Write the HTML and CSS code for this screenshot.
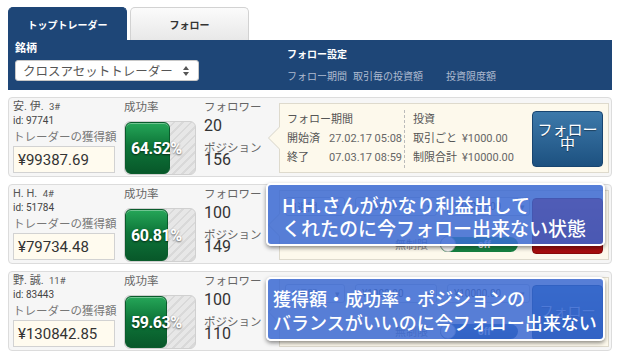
FILE: index.html
```html
<!DOCTYPE html>
<html lang="ja">
<head>
<meta charset="UTF-8">
<meta name="viewport" content="width=device-width, initial-scale=1.0">
<title>トップトレーダー</title>
<link rel="stylesheet" href="styles.css">
</head>
<body>

<div class="page">
    <div class="tabs">
        <div class="tab active">トップトレーダー</div>
        <div class="tab">フォロー</div>
    </div>

    <div class="header">
        <div class="brand">
            <div class="brand-label">銘柄</div>
            <div class="select">クロスアセットトレーダー
                <svg class="updown" width="6" height="10" viewBox="0 0 6 10"><polygon points="0,4 3,0 6,4" fill="#555"/><polygon points="0,6 3,10 6,6" fill="#555"/></svg>
            </div>
        </div>
        <div class="settings">
            <div class="settings-title">フォロー設定</div>
            <div class="settings-sub">
                <span class="sub-period">フォロー期間</span>
                <span class="sub-amount">取引毎の投資額</span>
                <span>投資限度額</span>
            </div>
        </div>
    </div>

    <div class="rows">
        <!-- row 1 -->
        <div class="row">
            <div class="trader">
                <div class="name">安. 伊.&nbsp;&nbsp;<span class="rank">3#</span></div>
                <div class="tid">id: 97741</div>
                <div class="earn-label">トレーダーの獲得額</div>
                <div class="earn">¥99387.69</div>
            </div>
            <div class="rate">
                <div class="col-label">成功率</div>
                <div class="gauge">
                    <div class="gauge-fill" style="width: 64.52%"></div>
                    <div class="gauge-text">64.52%</div>
                </div>
            </div>
            <div class="stats">
                <div class="col-label">フォロワー</div>
                <div class="stat-value">20</div>
                <div class="col-label pos-label">ポジション</div>
                <div class="stat-value pos-value">156</div>
            </div>
            <div class="popover">
                <div class="pop-period">
                    <div>フォロー期間</div>
                    <div><span class="pop-key">開始済</span><span class="num">27.02.17 05:08</span></div>
                    <div><span class="pop-key">終了</span><span class="num">07.03.17 08:59</span></div>
                </div>
                <div class="pop-invest">
                    <div>投資</div>
                    <div><span class="pop-key wide">取引ごと</span><span class="num">¥1000.00</span></div>
                    <div><span class="pop-key wide">制限合計</span><span class="num">¥10000.00</span></div>
                </div>
                <div class="follow-btn"><span>フォロー</span><span>中</span></div>
            </div>
        </div>

        <!-- row 2 -->
        <div class="row">
            <div class="trader">
                <div class="name">H. H.&nbsp;&nbsp;<span class="rank">4#</span></div>
                <div class="tid">id: 51784</div>
                <div class="earn-label">トレーダーの獲得額</div>
                <div class="earn">¥79734.48</div>
            </div>
            <div class="rate">
                <div class="col-label">成功率</div>
                <div class="gauge">
                    <div class="gauge-fill" style="width: 60.81%"></div>
                    <div class="gauge-text">60.81%</div>
                </div>
            </div>
            <div class="stats">
                <div class="col-label">フォロワー</div>
                <div class="stat-value">100</div>
                <div class="col-label pos-label">ポジション</div>
                <div class="stat-value pos-value">149</div>
            </div>
            <div class="popover">
                <div class="pop-form">
                    <div class="pop-selects">
                        <div class="mini-select s1">1週間<span class="caret">▾</span></div>
                        <div class="mini-select s2">¥1000.00<span class="caret">▾</span></div>
                        <div class="mini-select s3">¥10000.00<span class="caret">▾</span></div>
                    </div>
                    <div class="pop-limit">
                        <span>無制限</span>
                        <div class="toggle"><span class="knob"></span>off</div>
                    </div>
                </div>
                <div class="follow-btn red"></div>
            </div>
            <div class="callout callout-one">H.H.さんがかなり利益出して<br>くれたのに今フォロー出来ない状態</div>
        </div>

        <!-- row 3 -->
        <div class="row">
            <div class="trader">
                <div class="name">野. 誠.&nbsp;&nbsp;<span class="rank">11#</span></div>
                <div class="tid">id: 83443</div>
                <div class="earn-label">トレーダーの獲得額</div>
                <div class="earn">¥130842.85</div>
            </div>
            <div class="rate">
                <div class="col-label">成功率</div>
                <div class="gauge">
                    <div class="gauge-fill" style="width: 59.63%"></div>
                    <div class="gauge-text">59.63%</div>
                </div>
            </div>
            <div class="stats">
                <div class="col-label">フォロワー</div>
                <div class="stat-value">100</div>
                <div class="col-label pos-label">ポジション</div>
                <div class="stat-value pos-value">110</div>
            </div>
            <div class="popover">
                <div class="pop-form">
                    <div class="pop-selects">
                        <div class="mini-select s1">1週間<span class="caret">▾</span></div>
                        <div class="mini-select s2">¥1000.00<span class="caret">▾</span></div>
                        <div class="mini-select s3">¥10000.00<span class="caret">▾</span></div>
                    </div>
                    <div class="pop-limit">
                        <span>無制限</span>
                        <div class="toggle blue"><span class="knob"></span>off</div>
                    </div>
                </div>
                <div class="follow-btn plain"><span>フォロー</span></div>
            </div>
            <div class="callout callout-two">獲得額・成功率・ポジションの<br>バランスがいいのに今フォロー出来ない</div>
        </div>
    </div>
</div>

</body>
</html>
```

FILE: styles.css
```css
body {
    margin: 0;
    font-family: Roboto, "Noto Sans CJK JP", sans-serif;
    background-color: #fff;
    color: #555;
}
.page {
    padding: 7px 8px 0;
}
.num {
    font-family: "Liberation Sans Narrow", Roboto, "Noto Sans CJK JP", sans-serif;
    color: #666;
}

/* tabs */
.tabs {
    display: flex;
    gap: 3px;
}
.tab {
    width: 119px;
    height: 33px;
    box-sizing: border-box;
    display: flex;
    align-items: center;
    justify-content: center;
    font-size: 10px;
    font-weight: bold;
    color: #333;
    border: 1px solid #d2d2d2;
    border-bottom: none;
    border-radius: 5px 5px 0 0;
    background: linear-gradient(#fbfbfb, #e8e8e8);
}
.tab.active {
    background: #1e4677;
    border-color: #1e4677;
    color: #fff;
}

/* blue header */
.header {
    display: flex;
    height: 50px;
    padding: 0 7px;
    background-color: #1e4677;
    color: #fff;
}
.brand {
    width: 272px;
}
.brand-label {
    padding-top: 2px;
    font-size: 11px;
    font-weight: bold;
    line-height: 14px;
}
.select {
    display: flex;
    align-items: center;
    justify-content: space-between;
    width: 184px;
    height: 21px;
    box-sizing: border-box;
    margin-top: 4px;
    padding: 0 9px 0 7px;
    background: #fff;
    border: 1px solid #c8c8c8;
    border-radius: 3px;
    color: #555;
    font-size: 12.5px;
}
.settings-title {
    padding-top: 8px;
    font-size: 10px;
    font-weight: bold;
    line-height: 14px;
}
.settings-sub {
    display: flex;
    margin-top: 8px;
    font-size: 10px;
    line-height: 14px;
    color: #aebbd0;
}
.sub-period {
    width: 66px;
}
.sub-amount {
    width: 93px;
}

/* trader rows */
.rows {
    display: flex;
    flex-direction: column;
    gap: 7px;
    margin-top: 7px;
}
.row {
    position: relative;
    display: flex;
    height: 80px;
    box-sizing: border-box;
    padding: 2px 0 0 4px;
    background: #f6f6f6;
    border: 1px solid #dcdcdc;
    border-radius: 4px;
}
.trader {
    width: 111px;
}
.name {
    font-size: 11px;
    line-height: 14px;
    color: #555;
}
.rank {
    font-size: 9.5px;
}
.tid {
    font-size: 10px;
    line-height: 14px;
    color: #444;
}
.earn-label {
    font-size: 11.5px;
    line-height: 18px;
    color: #777;
}
.earn {
    display: flex;
    align-items: center;
    width: 102px;
    height: 27px;
    box-sizing: border-box;
    padding-left: 4px;
    background: #fffbef;
    border: 1px solid #d2d2d2;
    font-size: 15px;
    color: #333;
}

.rate {
    width: 72px;
    margin-right: 8px;
}
.col-label {
    font-size: 11.5px;
    line-height: 14px;
    color: #666;
}
.gauge {
    display: grid;
    grid-template-columns: 100%;
    height: 54px;
    box-sizing: border-box;
    margin-top: 7px;
    border: 1px solid #d0d0d0;
    border-radius: 6px;
    background: repeating-linear-gradient(135deg, #e7e7e7 0 4px, #d9d9d9 4px 6px);
    overflow: hidden;
}
.gauge-fill,
.gauge-text {
    grid-area: 1 / 1;
}
.gauge-fill {
    box-sizing: border-box;
    border: 1px solid #0a5c2c;
    border-radius: 6px;
    background: linear-gradient(#25a658, #0e7639 45%, #08582a);
    box-shadow: inset 0 1px 0 rgba(255, 255, 255, 0.35);
}
.gauge-text {
    align-self: center;
    padding-left: 6px;
    font-family: "Liberation Sans Narrow", Roboto, sans-serif;
    font-size: 16px;
    font-weight: bold;
    letter-spacing: -0.4px;
    color: #fff;
    text-shadow: 0 1px 2px rgba(0, 0, 0, 0.6);
}

.stats {
    width: 64px;
    margin-right: 11px;
}
.stat-value {
    font-family: "Liberation Sans Narrow", Roboto, sans-serif;
    font-size: 16px;
    line-height: 24px;
    color: #333;
}
.pos-label {
    line-height: 20px;
}
.pos-value {
    line-height: 16px;
    margin-top: -6px;
}

/* follow popover */
.popover {
    position: relative;
    display: flex;
    width: 330px;
    height: 70px;
    box-sizing: border-box;
    margin-top: 3px;
    padding: 0 5px 0 7px;
    background: #fdf9ec;
    border: 1px solid #dedacd;
    font-size: 11px;
    color: #555;
}
.popover::before,
.popover::after {
    content: "";
    position: absolute;
    top: 23px;
    border-top: 11px solid transparent;
    border-bottom: 11px solid transparent;
}
.popover::before {
    left: -12px;
    border-right: 11px solid #d6d3c8;
}
.popover::after {
    left: -11px;
    border-right: 11px solid #fdf9ec;
}
.pop-period {
    width: 117px;
    margin-top: 6px;
    line-height: 19px;
}
.pop-invest {
    width: 128px;
    box-sizing: border-box;
    margin: 6px 0 4px;
    padding-left: 8px;
    border-left: 1px dashed #bbb;
    line-height: 19px;
}
.pop-key {
    display: inline-block;
    width: 42px;
}
.pop-key.wide {
    width: 49px;
}
.follow-btn {
    display: flex;
    flex-direction: column;
    align-items: center;
    justify-content: center;
    width: 71px;
    height: 56px;
    box-sizing: border-box;
    margin-top: 7px;
    padding-bottom: 4px;
    background: linear-gradient(#3d79aa, #1d5180);
    border: 1px solid #184570;
    border-radius: 4px;
    font-size: 15px;
    line-height: 14px;
    color: #fff;
    text-shadow: 0 1px 1px rgba(0, 0, 0, 0.4);
}
.follow-btn.red {
    background: linear-gradient(#d22a2a, #a50c0c);
    border-color: #870a0a;
}
.follow-btn.plain {
    font-size: 14px;
    color: #cfe0f0;
}

.pop-form {
    display: flex;
    flex-direction: column;
    width: 247px;
    margin-left: -2px;
}
.pop-selects {
    display: flex;
    gap: 10px;
    margin-top: 6px;
}
.mini-select {
    display: flex;
    align-items: center;
    justify-content: space-between;
    height: 19px;
    box-sizing: border-box;
    padding: 0 4px 0 6px;
    background: #fff;
    border: 1px solid #ccc;
    border-radius: 3px;
    font-size: 10px;
    color: #666;
}
.s1 { width: 60px; }
.s2 { width: 82px; }
.s3 { width: 83px; }
.caret {
    font-size: 9px;
    color: #888;
}
.pop-limit {
    display: flex;
    align-items: center;
    justify-content: flex-end;
    gap: 12px;
    margin-top: 20px;
    padding-right: 14px;
    color: #888;
}
.toggle {
    display: flex;
    align-items: center;
    width: 78px;
    height: 15px;
    border-radius: 8px;
    background: linear-gradient(#31a85d, #138040);
    font-size: 10px;
    font-weight: bold;
    color: #fff;
}
.toggle.blue {
    background: linear-gradient(#2f6ea6, #1c4f80);
}
.knob {
    width: 16px;
    height: 16px;
    box-sizing: border-box;
    margin-right: 22px;
    border: 1px solid #bbb;
    border-radius: 50%;
    background: #fafafa;
}

/* annotation boxes over rows 2 and 3 */
.callout {
    position: absolute;
    left: 257px;
    width: 339px;
    box-sizing: border-box;
    border: 2px solid #fff;
    border-radius: 5px;
    background: rgba(55, 103, 210, 0.84);
    box-shadow: 0 2px 4px rgba(0, 0, 0, 0.45);
    color: #fff;
    font-family: "Noto Sans CJK JP", sans-serif;
    font-weight: 500;
}
.callout-one {
    top: -2px;
    height: 63px;
    padding: 8px 0 0 14px;
    font-size: 19px;
    line-height: 23px;
}
.callout-two {
    top: 5px;
    height: 64px;
    padding: 7px 0 0 5px;
    font-size: 18px;
    line-height: 24px;
}
```
